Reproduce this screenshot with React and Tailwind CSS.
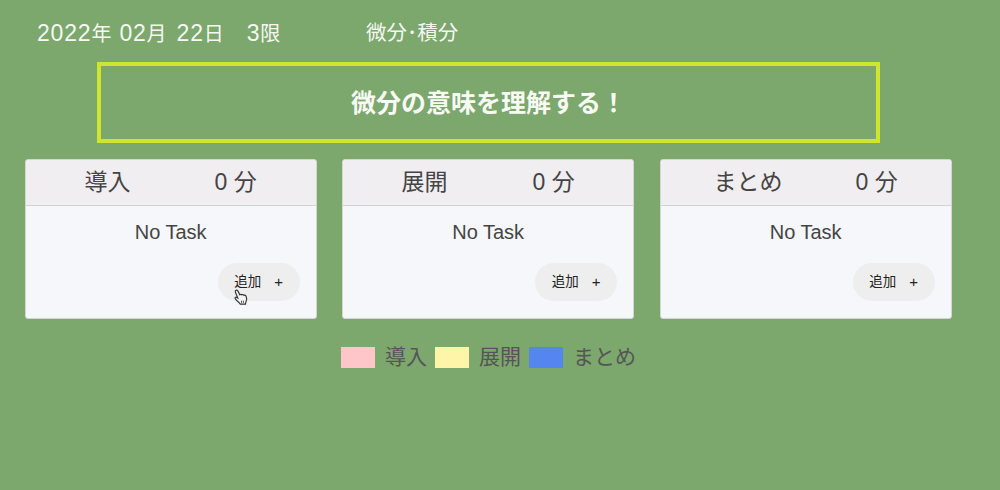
import React from "react";

const font = { fontFamily: '"Liberation Sans", "Noto Sans CJK JP", sans-serif' };

const Cursor = () => (
  <svg className="absolute left-[15px] top-[26px]" width="17" height="17" viewBox="0 0 15 16">
    <path
      d="M2.300 1.200c.8-.4 1.500 0 1.900.8l1.700 3.400c.6-.6 1.500-.5 1.900.1.700-.4 1.500-.2 1.900.4.800-.2 1.700.2 2.100 1 .7 1.400.6 3.500 0 5-.3.800-.5 1.500-.5 2.300H6.300c-.5-1-1.500-1.800-2.700-2.800-.9-.8-2-1.800-2.200-2.700-.1-.7.600-1.200 1.300-.9l1.300.8L1.800 3c-.3-.7-.2-1.400.5-1.800z"
      fill="#f4f4f4"
      stroke="#333"
      strokeWidth="1.100"
    />
    <path d="M7.500 11v2M9.300 11v2" stroke="#444" strokeWidth="0.9" />
  </svg>
);

const Card = ({ title, gap }) => (
  <div className="w-[292px] h-[160px] rounded-[3px] bg-[#f5f7fb] border border-[#d4d6d4] flex flex-col overflow-hidden">
    <div className={`h-[46px] shrink-0 bg-[#f0eef0] border-b border-[#d2d4d2] flex justify-center items-center text-[23px] text-[#444] ${gap}`}>
      <span>{title}</span>
      <span>0 分</span>
    </div>
    <div className="text-center text-[20px] text-[#444] mt-[13px] leading-[26px]">No Task</div>
    <div className="flex justify-end mt-[18px] pr-[16px]">
      <button className="relative w-[82px] h-[38px] rounded-full bg-[#eeeeee] text-[13.5px] text-[#222] flex items-center justify-center gap-[13px]">
        <span>追加</span>
        <span className="text-[15px]">+</span>
        {title === "導入" && <Cursor />}
      </button>
    </div>
  </div>
);

const Legend = ({ color, label }) => (
  <div className="flex items-center gap-[10px]">
    <span className={`w-[34px] h-[21px] ${color}`} />
    <span className="text-[21px] pb-[2px] text-[#555]">{label}</span>
  </div>
);

const Num = ({ children }) => (
  <span className="text-[23px] tracking-[0.8px]">{children}</span>
);

export default function App() {
  return (
    <div className="w-[1000px] h-[490px] bg-[#7ca76d] overflow-hidden" style={font}>
      <div className="flex pl-[37px] pt-[20px] h-[62px] text-[20px] leading-[26px] text-[#f6f8f2]">
        <span className="w-[329px] whitespace-nowrap">
          <Num>2022</Num>年<span className="ml-[8px]"><Num>02</Num>月</span>
          <span className="ml-[10px]"><Num>22</Num>日</span>
          <span className="ml-[23px]"><Num>3</Num>限</span>
        </span>
        <span className="text-[20.5px]">微分･積分</span>
      </div>
      <div className="ml-[97px] w-[783px] h-[81px] pt-[2px] border-4 border-[#cfe62e] flex items-center justify-center text-[25px] font-bold text-[#f8faf4]">
        微分の意味を理解する！
      </div>
      <div className="flex pl-[24.7px] gap-[25.5px] mt-[16px]">
        <Card title="導入" gap="gap-[84px]" />
        <Card title="展開" gap="gap-[85px]" />
        <Card title="まとめ" gap="gap-[73px]" />
      </div>
      <div className="flex justify-center gap-[8px] mt-[22px] ml-[-23px]">
        <Legend color="bg-[#ffc6ca]" label="導入" />
        <Legend color="bg-[#fff5a8]" label="展開" />
        <Legend color="bg-[#5585ee]" label="まとめ" />
      </div>
    </div>
  );
}
